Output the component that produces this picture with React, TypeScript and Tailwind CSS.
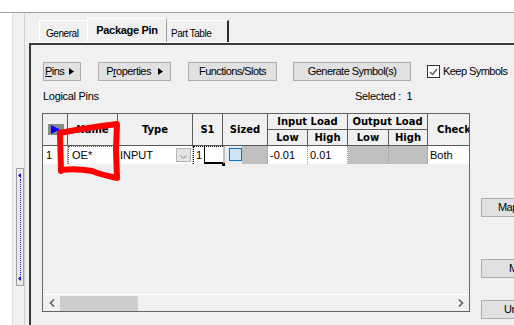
import React from 'react';

const ui = "font-['Liberation_Sans',Arial,sans-serif] text-[11px] tracking-[-0.55px]";
const cellFont = "font-['Liberation_Sans',Arial,sans-serif] text-[11px] tracking-normal";
const hdr = "font-['DejaVu_Sans',Verdana,sans-serif] font-bold text-[10px] tracking-normal";
const tabFont = "font-['Liberation_Sans',Arial,sans-serif] text-[10px] tracking-[-0.45px]";

function Btn({ children, className = '' }: { children: React.ReactNode; className?: string }) {
  return (
    <div
      className={`h-[19px] shrink-0 flex items-center justify-center bg-[#e1e1e1] border border-[#adadad] leading-none ${className}`}
    >
      {children}
    </div>
  );
}

function Arrow() {
  return (
    <svg width="5" height="7" viewBox="0 0 5 7" className="ml-[5px]">
      <path d="M0 0 L5 3.5 L0 7 Z" fill="#000" />
    </svg>
  );
}

function Splitter() {
  return (
    <div className="mt-[155px] ml-[3px] w-[8px] h-[118px] border border-[#a0a0a0] bg-[#ececec] flex flex-col items-center py-[4px]">
      <svg width="4" height="5" viewBox="0 0 4 5">
        <path d="M3 0 L0 2.5 L3 5 Z" fill="#1010c0" />
      </svg>
      <div className="flex-1 border-l border-dotted border-[#2020c0] my-[1px]" />
      <svg width="4" height="5" viewBox="0 0 4 5">
        <path d="M3 0 L0 2.5 L3 5 Z" fill="#1010c0" />
      </svg>
    </div>
  );
}

function Tabs() {
  return (
    <div className="h-[29px] flex items-end pl-[14px] shrink-0">
      <div className={`h-[22px] w-[48px] border-t border-l border-white flex items-center pl-[6px] pt-[3px] ${tabFont}`}>
        General
      </div>
      <div className="h-[25px] w-[80px] -mb-[1px] border-t border-l border-white border-r border-r-[#a0a0a0] bg-[#f0f0f0] flex items-center justify-center pb-[2px] font-['Liberation_Sans',Arial,sans-serif] font-bold text-[11px] tracking-[-0.3px]">
        Package Pin
      </div>
      <div className={`h-[22px] w-[62px] border-t border-white border-r-2 border-r-[#303030] flex items-center pl-[4px] pt-[3px] ${tabFont}`}>
        Part Table
      </div>
    </div>
  );
}

const cols = 'grid grid-cols-[25px_50px_75px_30px_45px_40px_40px_41px_39px_52px]';

function Header() {
  const cell = 'border-r border-b border-[#5a5a5a] flex items-center justify-center bg-[#f0f0f0]';
  return (
    <div className={`${cols} grid-rows-[16px_16px] ${hdr} shrink-0`}>
      <div className={`${cell} row-span-2 justify-start pl-[5px]`}>
        <div className="w-[16px] h-[11px] bg-[#8a8a8a] flex items-center pl-[3px]">
          <svg width="9" height="9" viewBox="0 0 9 9">
            <path d="M0 0 L9 4.5 L0 9 Z" fill="#0000ff" />
          </svg>
        </div>
      </div>
      <div className={`${cell} row-span-2`}>Name</div>
      <div className={`${cell} row-span-2`}>Type</div>
      <div className={`${cell} row-span-2`}>S1</div>
      <div className={`${cell} row-span-2`}>Sized</div>
      <div className={`${cell} col-span-2`}>Input Load</div>
      <div className={`${cell} col-span-2`}>Output Load</div>
      <div className={`${cell} row-span-2 border-r-0`}>Check</div>
      <div className={cell}>Low</div>
      <div className={cell}>High</div>
      <div className={cell}>Low</div>
      <div className={cell}>High</div>
    </div>
  );
}

function DataRow() {
  const cell = 'border-r border-dotted border-[#9a9a9a] flex items-center pl-[2px] overflow-hidden';
  return (
    <div className={`${cols} h-[16px] border-b border-[#b0b0b0] ${cellFont} shrink-0`}>
      <div className="bg-white border-r border-[#b0b0b0] flex items-center pl-[3px]">1</div>
      <div className={`${cell} bg-white pl-[3px] border-l border-t border-dotted border-[#606060]`}>OE*</div>
      <div className={`${cell} bg-white justify-between pr-[1px]`}>
        <span>INPUT</span>
        <div className="w-[15px] h-[14px] bg-[#e5e5e5] border border-[#b4b4b4] flex items-end justify-center pb-[2px]">
          <svg width="7" height="4" viewBox="0 0 7 4">
            <path d="M0.5 0.5 L3.5 3.5 L6.5 0.5" fill="none" stroke="#808080" />
          </svg>
        </div>
      </div>
      <div className="relative bg-white border-t border-l border-dotted border-black flex items-stretch pl-[2px]">
        <span className="flex items-center">1</span>
        <div className="flex-1 ml-[2px] border-l border-b-2 border-black bg-white" />
        <div className="absolute right-[-2px] bottom-[-2px] w-[3px] h-[3px] bg-black" />
      </div>
      <div className={`${cell} bg-[#c0c0c0] pl-0`}>
        <div className="h-full w-[17px] bg-[#ececec] flex items-center justify-end">
          <div className="w-[13px] h-[13px] border border-[#0078d7] bg-[#cce4f7]" />
        </div>
      </div>
      <div className={`${cell} bg-white`}>-0.01</div>
      <div className={`${cell} bg-white`}>0.01</div>
      <div className={`${cell} bg-[#c0c0c0]`} />
      <div className={`${cell} bg-[#c0c0c0]`} />
      <div className={`${cell} bg-white`}>Both</div>
    </div>
  );
}

function HScroll() {
  return (
    <div className="h-[17px] border-t border-white flex items-center shrink-0">
      <div className="w-[17px] flex items-center justify-center">
        <svg width="6" height="8" viewBox="0 0 6 8">
          <path d="M5 0.5 L1.5 4 L5 7.5" fill="none" stroke="#606060" strokeWidth="1.6" />
        </svg>
      </div>
      <div className="w-[78px] h-[15px] bg-[#cdcdcd]" />
      <div className="flex-1" />
      <div className="w-[17px] flex items-center justify-center">
        <svg width="6" height="8" viewBox="0 0 6 8">
          <path d="M1 0.5 L4.5 4 L1 7.5" fill="none" stroke="#606060" strokeWidth="1.6" />
        </svg>
      </div>
    </div>
  );
}

export default function App() {
  return (
    <div className={`relative w-[514px] h-[325px] overflow-hidden bg-white text-black flex flex-col ${ui}`}>
      <div className="h-[13px] bg-white border-b border-[#a0a0a0] shrink-0" />
      <div className="flex flex-1 min-h-0">
        <div className="w-[12px] bg-white shrink-0" />
        <div className="w-[13px] bg-[#f0f0f0] border-l border-[#e3e3e3] border-r border-r-[#cfcfcf] shrink-0 flex flex-col">
          <Splitter />
        </div>
        <div className="flex-1 min-w-0 bg-[#f0f0f0] flex flex-col">
          <Tabs />
          <div className="flex-1 border-t border-white flex flex-col min-h-0">
            <div className="flex-1 ml-[4px] border-t-2 border-l-2 border-[#3a3a3a] pt-[17px] pl-[11px] flex flex-col min-h-0">
              {/* toolbar */}
              <div className="flex items-center ml-[1px]">
                <Btn className="w-[38px] justify-start pl-[1px]">
                  <span><span className="underline">P</span>ins</span>
                  <Arrow />
                </Btn>
                <Btn className="w-[73px] ml-[17px]">
                  <span>P<span className="underline">r</span>operties</span>
                  <span className="ml-[2px]"><Arrow /></span>
                </Btn>
                <Btn className="w-[89px] ml-[17px]">Functions/Slots</Btn>
                <Btn className="w-[118px] ml-[16px]">Generate Symbol(s)</Btn>
                <div className="ml-[16px] w-[13px] h-[13px] border border-[#333] bg-white flex items-center justify-center shrink-0">
                  <svg width="9" height="8" viewBox="0 0 9 8">
                    <path d="M1 4 L3.5 6.5 L8 1" fill="none" stroke="#555" strokeWidth="1.3" />
                  </svg>
                </div>
                <span className="ml-[3px] whitespace-nowrap">Keep Symbols</span>
              </div>

              <div className="flex mt-[9px] ml-[1px] leading-[13px] tracking-[-0.3px]">
                <span className="w-[312px]">Logical Pins</span>
                <span>Selected :&nbsp; 1</span>
              </div>

              <div className="flex mt-[10px]">
                <div className="w-[428px] h-[199px] border border-[#646464] flex flex-col overflow-hidden shrink-0">
                  <Header />
                  <DataRow />
                  <div className="flex-1" />
                  <HScroll />
                </div>
                <div className="ml-[11px] flex flex-col shrink-0">
                  <Btn className="w-[60px] mt-[85px] justify-start pl-[16px]">Map</Btn>
                  <Btn className="w-[60px] mt-[42px] justify-start pl-[27px]">Move</Btn>
                  <Btn className="w-[60px] mt-[22px] justify-start pl-[22px]">Un</Btn>
                </div>
              </div>

              <div className="flex items-start mt-[11px] ml-[1px]">
                <span className="w-[120px] leading-[13px]">Global Pins</span>
                <Btn className="w-[53px]">Add</Btn>
                <Btn className="w-[93px] ml-[22px]">Delete</Btn>
              </div>
            </div>
          </div>
        </div>
      </div>

      {/* red hand-drawn annotation */}
      <svg className="absolute left-0 top-0 pointer-events-none" width="514" height="325">
        <path
          d="M61 171 L60 133 Q85 128 117 124 L116 150 L117 178 Q102 175 92 171 Q76 168 61 170"
          fill="none"
          stroke="#ff0000"
          strokeWidth="6"
          strokeLinejoin="round"
          strokeLinecap="round"
        />
      </svg>
    </div>
  );
}
